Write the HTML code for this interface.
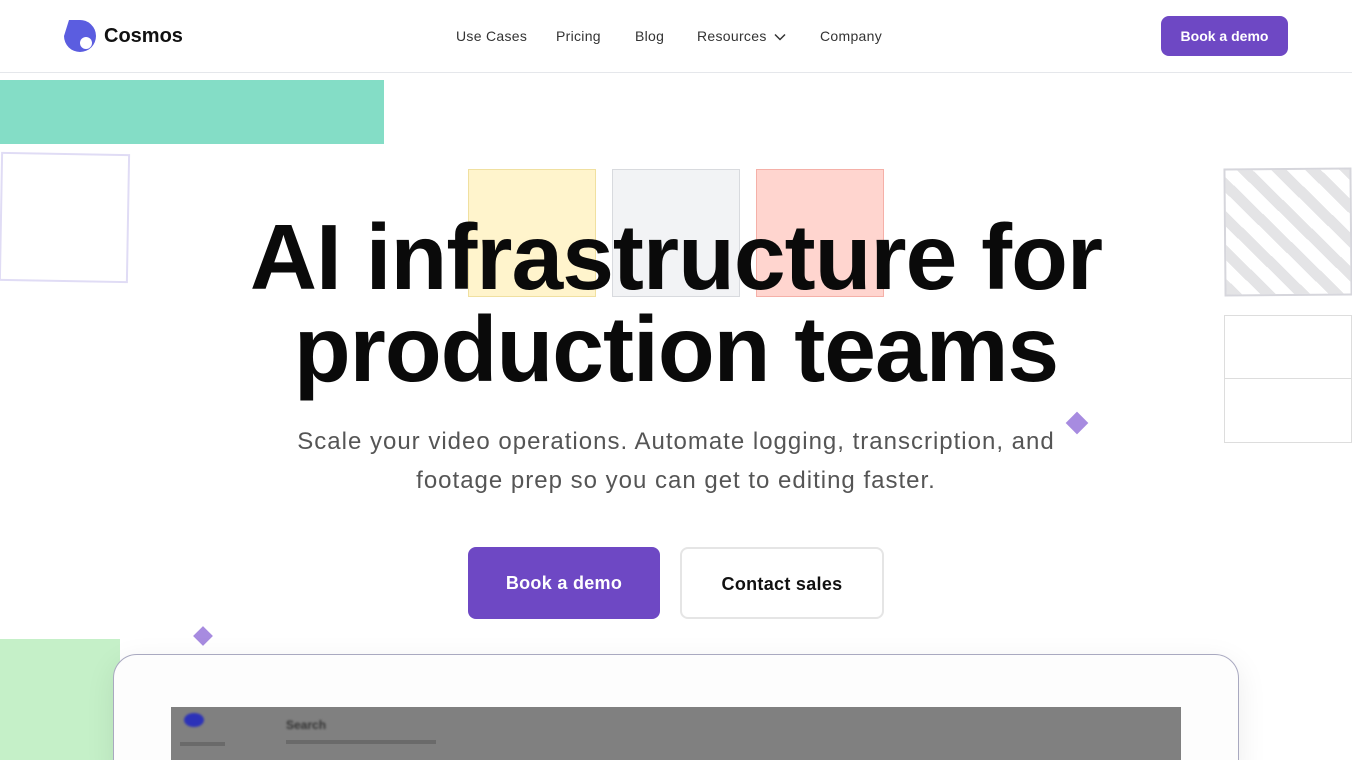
<!DOCTYPE html>
<html style="overflow:hidden;height:760px"><head><meta charset="utf-8"><style>
*{margin:0;padding:0;box-sizing:border-box}
body{width:1352px;height:760px;overflow:hidden;background:#fff;font-family:"Liberation Sans",sans-serif;position:relative;color:#111}
.abs{position:absolute}
nav{position:absolute;left:0;top:0;width:1352px;height:73px;border-bottom:1px solid #e5e7eb}
.nl{position:absolute;top:28px;font-size:14px;color:#333;letter-spacing:0.3px}
.btn{position:absolute;background:#6e48c4;color:#fff;border-radius:8px;text-align:center;font-weight:bold}
h1{position:absolute;left:0;width:1352px;text-align:center;font-size:93px;font-weight:bold;letter-spacing:-1px;line-height:92px;top:211px;color:#0a0a0a}
.sub{position:absolute;left:0;width:1352px;top:422px;text-align:center;font-size:24px;line-height:39px;color:#555;letter-spacing:1px}
.dia{position:absolute;width:14px;height:14px;background:#a78be0;transform:rotate(45deg)}
</style></head><body>
<nav>
<svg class="abs" style="left:63px;top:19px" width="34" height="34" viewBox="0 0 34 34"><path d="M6 1 H16 A16 16 0 0 1 33 17 A16 16 0 0 1 1 17 Z" fill="#5b5de0"/><circle cx="23" cy="24" r="6" fill="#fff"/></svg>
<div class="abs" style="left:104px;top:25px;font-size:20px;font-weight:bold;color:#111">Cosmos</div>
<div class="nl" style="left:456px">Use Cases</div>
<div class="nl" style="left:556px">Pricing</div>
<div class="nl" style="left:635px">Blog</div>
<div class="nl" style="left:697px">Resources <svg width="12" height="8" viewBox="0 0 12 8" style="margin-left:3px"><path d="M1 1.5 L6 6.5 L11 1.5" stroke="#333" stroke-width="1.5" fill="none"/></svg></div>
<div class="nl" style="left:820px">Company</div>
<div class="btn" style="left:1161px;top:16px;width:127px;height:40px;line-height:40px;font-size:14px">Book a demo</div>
</nav>
<div class="abs" style="left:0;top:80px;width:384px;height:64px;background:#84ddc6"></div>
<div class="abs" style="left:0;top:153px;width:129px;height:129px;border:2px solid #e0dcf5;transform:rotate(1deg)"></div>
<div class="abs" style="left:468px;top:169px;width:128px;height:128px;background:#fff4cc;border:1px solid #f0e0a0"></div>
<div class="abs" style="left:612px;top:169px;width:128px;height:128px;background:#f2f3f5;border:1px solid #d8dade"></div>
<div class="abs" style="left:756px;top:169px;width:128px;height:128px;background:#ffd5cf;border:1px solid #f5b0a8"></div>
<div class="abs" style="left:1224px;top:168px;width:128px;height:128px;border:2px solid #d6d6dc;background:repeating-linear-gradient(45deg,#e4e4e6 0 11px,#fff 11px 24px);transform:rotate(-0.5deg)"></div>
<div class="abs" style="left:1224px;top:315px;width:128px;height:64px;border:1px solid #ddd"></div>
<div class="abs" style="left:1224px;top:378px;width:128px;height:65px;border:1px solid #ddd"></div>
<h1>AI infrastructure for<br>production teams</h1>
<div class="sub">Scale your video operations. Automate logging, transcription, and<br>footage prep so you can get to editing faster.</div>
<div class="dia" style="left:1069px;top:415px;width:16px;height:16px"></div>
<div class="dia" style="left:196px;top:629px"></div>
<div class="btn" style="left:468px;top:547px;width:192px;height:72px;line-height:72px;font-size:18px;letter-spacing:0.3px">Book a demo</div>
<div class="abs" style="left:680px;top:547px;width:204px;height:72px;line-height:70px;border:2px solid #e5e5e5;border-radius:8px;text-align:center;font-size:18px;font-weight:bold;color:#111;letter-spacing:0.3px">Contact sales</div>
<div class="abs" style="left:0;top:639px;width:120px;height:121px;background:#c5f0c8"></div>
<div class="abs" style="left:113px;top:654px;width:1126px;height:130px;border:1px solid #a9a9c0;border-radius:24px;background:#fdfdfd;box-shadow:0 8px 30px rgba(0,0,0,0.08)"></div>
<div class="abs" style="left:171px;top:707px;width:1010px;height:53px;background:#808080"></div>
<div class="abs" style="left:184px;top:713px;width:20px;height:14px;border-radius:50%;background:#2c32b8;filter:blur(1px)"></div>
<div class="abs" style="left:286px;top:718px;font-size:12px;font-weight:bold;color:#333;filter:blur(1px)">Search</div>
<div class="abs" style="left:286px;top:740px;width:150px;height:4px;background:#6a6a6a"></div>
<div class="abs" style="left:180px;top:742px;width:45px;height:4px;background:#6a6a6a"></div>
</body></html>
